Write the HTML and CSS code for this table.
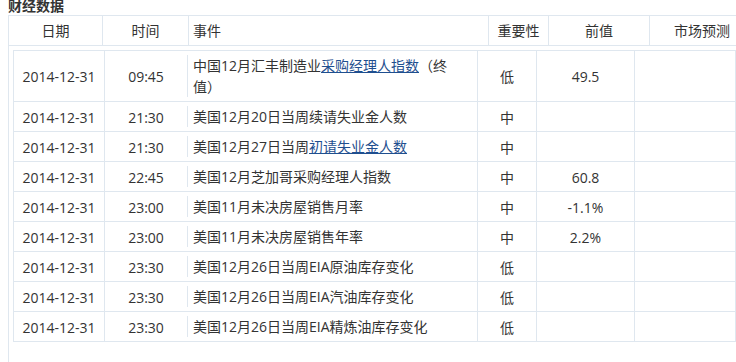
FILE: index.html
```html
<!DOCTYPE html>
<html lang="zh-CN">
<head>
<meta charset="utf-8">
<title>财经数据</title>
<link rel="stylesheet" href="styles.css">
</head>
<body>
<div class="page">
  <h3 class="title">财经数据</h3>
  <div class="panel">
    <div class="head">
      <div class="hc">日期</div>
      <div class="hc">时间</div>
      <div class="hc left">事件</div>
      <div class="hc">重要性</div>
      <div class="hc">前值</div>
      <div class="hc last">市场预测</div>
    </div>
    <div class="body">
      <div class="grid">
        <div class="row tall">
          <div class="c">2014-12-31</div><div class="c">09:45</div>
          <div class="c ev">中国12月汇丰制造业<a href="#">采购经理人指数</a>（终<br>值）</div>
          <div class="c">低</div><div class="c">49.5</div><div class="c"></div>
        </div>
        <div class="row">
          <div class="c">2014-12-31</div><div class="c">21:30</div>
          <div class="c ev">美国12月20日当周续请失业金人数</div>
          <div class="c">中</div><div class="c"></div><div class="c"></div>
        </div>
        <div class="row">
          <div class="c">2014-12-31</div><div class="c">21:30</div>
          <div class="c ev">美国12月27日当周<a href="#">初请失业金人数</a></div>
          <div class="c">中</div><div class="c"></div><div class="c"></div>
        </div>
        <div class="row">
          <div class="c">2014-12-31</div><div class="c">22:45</div>
          <div class="c ev">美国12月芝加哥采购经理人指数</div>
          <div class="c">中</div><div class="c">60.8</div><div class="c"></div>
        </div>
        <div class="row">
          <div class="c">2014-12-31</div><div class="c">23:00</div>
          <div class="c ev">美国11月未决房屋销售月率</div>
          <div class="c">中</div><div class="c">-1.1%</div><div class="c"></div>
        </div>
        <div class="row">
          <div class="c">2014-12-31</div><div class="c">23:00</div>
          <div class="c ev">美国11月未决房屋销售年率</div>
          <div class="c">中</div><div class="c">2.2%</div><div class="c"></div>
        </div>
        <div class="row">
          <div class="c">2014-12-31</div><div class="c">23:30</div>
          <div class="c ev">美国12月26日当周EIA原油库存变化</div>
          <div class="c">低</div><div class="c"></div><div class="c"></div>
        </div>
        <div class="row">
          <div class="c">2014-12-31</div><div class="c">23:30</div>
          <div class="c ev">美国12月26日当周EIA汽油库存变化</div>
          <div class="c">低</div><div class="c"></div><div class="c"></div>
        </div>
        <div class="row">
          <div class="c">2014-12-31</div><div class="c">23:30</div>
          <div class="c ev">美国12月26日当周EIA精炼油库存变化</div>
          <div class="c">低</div><div class="c"></div><div class="c"></div>
        </div>
      </div>
    </div>
  </div>
</div>
</body>
</html>
```

FILE: styles.css
```css
html, body {
  margin: 0;
  padding: 0;
  overflow: hidden;
  background: #fff;
}
body {
  font-family: "Open Sans", "Noto Sans CJK SC", sans-serif;
  font-size: 14px;
  color: #333;
  text-spacing-trim: space-all;
}
.page {
  padding-left: 8px;
}
.title {
  margin: -4px 0 -1px;
  font-size: 14px;
  line-height: 20px;
  font-weight: bold;
  color: #333;
}
.panel {
  width: 745px;
  border: 1px solid #dfe7ef;
  border-right: none;
  padding-bottom: 40px;
}
.head {
  display: grid;
  grid-template-columns: 94px 86px 300px 60px 101px 104px;
  height: 29px;
  border-bottom: 1px solid #dfe7ef;
}
.hc {
  box-sizing: border-box;
  border-right: 1px solid #dfe7ef;
  display: flex;
  align-items: center;
  justify-content: center;
  line-height: 20px;
}
.hc.left {
  justify-content: flex-start;
  padding-left: 4px;
}
.hc.last {
  border-right: none;
}
.body {
  padding: 4px;
}
.grid {
  width: 722px;
  border-right: 1px solid #dfe7ef;
  border-bottom: 1px solid #dfe7ef;
}
.row {
  display: grid;
  grid-template-columns: 91px 83px 290px 59px 98px 101px;
  height: 30px;
  box-sizing: border-box;
  border-top: 1px solid #dfe7ef;
}
.row.tall {
  height: 51px;
}
.c {
  box-sizing: border-box;
  border-left: 1px solid #dfe7ef;
  display: flex;
  align-items: center;
  justify-content: center;
  line-height: 21px;
  padding-top: 1px;
}
.c.ev {
  display: block;
  align-self: center;
  padding: 0 5px;
}
.c a {
  color: #1f4f8f;
  text-decoration: underline;
}
```
